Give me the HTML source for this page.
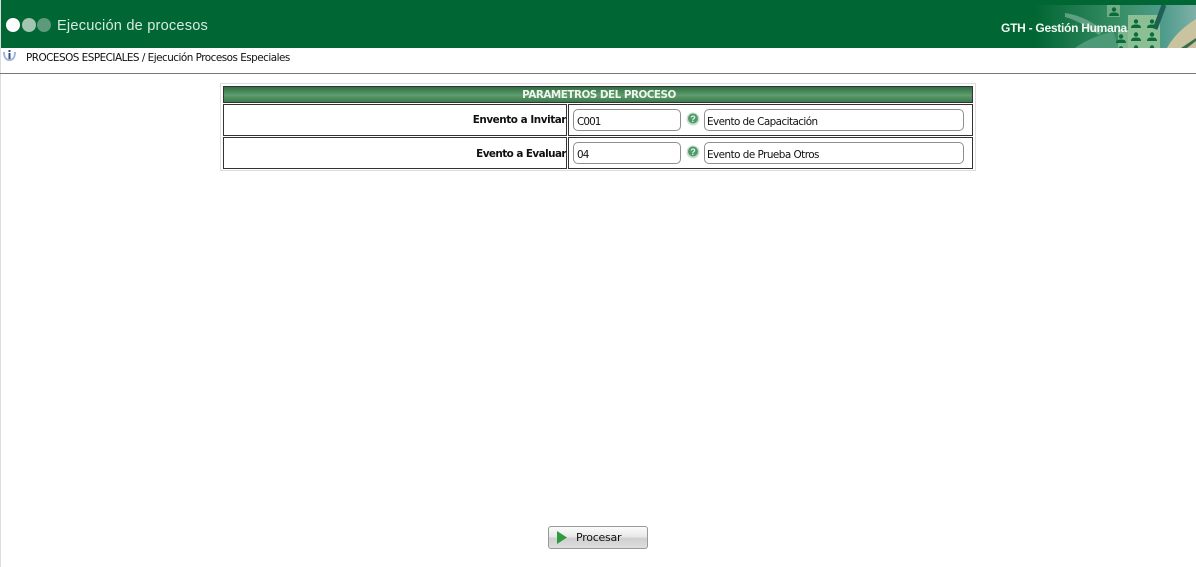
<!DOCTYPE html>
<html lang="es"><head><meta charset="utf-8"><title>Ejecución de procesos</title>
<style>
html,body{margin:0;padding:0;width:1196px;height:567px;overflow:hidden;background:#fff}
body{position:relative;font-family:"DejaVu Sans","Liberation Sans",sans-serif;color:#111}
.a{position:absolute;box-sizing:border-box}
.t{position:absolute;white-space:nowrap;font-size:10.4px;line-height:14px;letter-spacing:-.5px}
.b{font-weight:bold;letter-spacing:-.44px;text-align:right}
.cell{border:1px solid #333;background:#fff}
.inp{border:1px solid #8f8f8f;border-radius:5px;background:#fff}
.dot{position:absolute;border-radius:50%;width:14px;height:14px;top:18px}
</style></head><body>
<div class="a" style="left:0;top:0;width:1px;height:567px;background:#ddd"></div>
<div class="a" style="left:1px;top:0;width:1195px;height:48px;background:#006633"></div>
<svg class="a" style="left:1035px;top:5px" width="161" height="43" viewBox="0 0 161 43">
<defs><linearGradient id="g" x1="0" x2="1"><stop offset="0" stop-color="#006633"/><stop offset=".2" stop-color="#177547"/><stop offset=".55" stop-color="#3a9068"/><stop offset=".8" stop-color="#4f9c8c"/><stop offset="1" stop-color="#7fb0a8"/></linearGradient></defs>
<rect width="161" height="43" fill="url(#g)"/>
<path d="M30 8C45 10 60 18 68 26L64 30C52 22 42 15 30 12z" fill="#5fa082"/>
<path d="M40 43C52 34 66 30 78 26L84 43z" fill="#4d9a78"/>
<path d="M72 0H85V12H72z" fill="#6fae85"/>
<path d="M93 10H125V43H93z" fill="#8dbf95"/>
<path d="M83 25H93V43H83z" fill="#7db58c"/>
<path d="M129 0L120 24" stroke="#1f5f55" stroke-width="5" fill="none"/>
<path d="M132 43C138 32 148 22 161 14V43z" fill="#c9c3a0"/>
<path d="M146 43L161 33V36L152 43z" fill="#3d6b4f"/>
<g fill="#0b6b3c"><g id="p"><circle cx="79" cy="4.500" r="2.200"/><path d="M74 11c0-3 2-3.500 5-3.500s5 .5 5 3.500z"/></g>
<use href="#p" x="22" y="12"/><use href="#p" x="38" y="12"/><use href="#p" x="7" y="27"/><use href="#p" x="22" y="25"/><use href="#p" x="38" y="25"/><use href="#p" x="7" y="39"/><use href="#p" x="22" y="38"/><use href="#p" x="38" y="38"/></g>
</svg>
<div class="dot" style="left:6px;background:#fff"></div>
<div class="dot" style="left:22px;background:#a3c4b1"></div>
<div class="dot" style="left:37px;background:#5c9a7b"></div>
<div class="t" style="left:57px;top:17px;font:14.6px/18px 'Liberation Sans',sans-serif;color:#d6ebdf;letter-spacing:.2px">Ejecución de procesos</div>
<div class="t" style="left:1001px;top:21px;font:bold 12px/15px 'Liberation Sans',sans-serif;color:#f2f7f2;letter-spacing:-.27px">GTH - Gestión Humana</div>
<svg class="a" style="left:3px;top:49px" width="13" height="13" viewBox="0 0 13 13"><path d="M1 3c0 5 2 8 5.500 8S12 8 12 3" fill="none" stroke="#9fb6d6" stroke-width="2"/><rect x="5.500" y="1" width="2" height="2" fill="#2b4e8c"/><rect x="5.500" y="4" width="2" height="6" fill="#2b4e8c"/></svg>
<div class="t" style="left:26px;top:51px">PROCESOS ESPECIALES / Ejecución Procesos Especiales</div>
<div class="a" style="left:0;top:73px;width:1196px;height:1px;background:#777"></div>
<div class="a" style="left:220px;top:83px;width:756px;height:88px;border:1px solid #ddd"></div>
<div class="a" style="left:223px;top:86px;width:750px;height:17px;border:1px solid #333;background:linear-gradient(#2f6f43,#5f9c6e 55%,#3c7a4e)"></div>
<div class="t" style="left:224px;top:88px;width:750px;text-align:center;font-weight:bold;color:#eef5ec;letter-spacing:-.5px">PARAMETROS DEL PROCESO</div>
<div class="a cell" style="left:223px;top:104px;width:344px;height:32px"></div>
<div class="a cell" style="left:568px;top:104px;width:405px;height:32px"></div>
<div class="a cell" style="left:223px;top:137px;width:344px;height:32px"></div>
<div class="a cell" style="left:568px;top:137px;width:405px;height:32px"></div>
<div class="t b" style="left:223px;width:343px;top:113px">Envento a Invitar</div>
<div class="t b" style="left:223px;width:343px;top:147px;letter-spacing:-.55px">Evento a Evaluar</div>
<div class="a inp" style="left:573px;top:109px;width:108px;height:22px"></div>
<div class="a inp" style="left:704px;top:109px;width:260px;height:22px"></div>
<div class="a inp" style="left:573px;top:142px;width:108px;height:22px"></div>
<div class="a inp" style="left:704px;top:142px;width:260px;height:22px"></div>
<div class="t" style="left:577px;top:115px;letter-spacing:-.9px">C001</div>
<div class="t" style="left:707px;top:115px;letter-spacing:-.56px">Evento de Capacitación</div>
<div class="t" style="left:577px;top:148px;letter-spacing:-.9px">04</div>
<div class="t" style="left:707px;top:148px;letter-spacing:-.52px">Evento de Prueba Otros</div>
<svg class="a" style="left:686px;top:112px" width="14" height="14" viewBox="0 0 14 14"><circle cx="7" cy="7" r="6.500" fill="#c9e0cf"/><circle cx="7" cy="6.500" r="5" fill="#4f9a68"/><text x="7" y="10" font-size="9" font-weight="bold" text-anchor="middle" fill="#e8f5ea" font-family="Liberation Sans">?</text></svg>
<svg class="a" style="left:686px;top:145px" width="14" height="14" viewBox="0 0 14 14"><circle cx="7" cy="7" r="6.500" fill="#c9e0cf"/><circle cx="7" cy="6.500" r="5" fill="#4f9a68"/><text x="7" y="10" font-size="9" font-weight="bold" text-anchor="middle" fill="#e8f5ea" font-family="Liberation Sans">?</text></svg>
<div class="a" style="left:548px;top:526px;width:100px;height:23px;border:1px solid #999;border-radius:3px;background:linear-gradient(#fbfbfb,#e9e9e9 45%,#cfcfcf 55%,#dedede)"></div>
<svg class="a" style="left:556px;top:530px" width="12" height="15" viewBox="0 0 12 15"><path d="M1 1L11 7.500L1 14z" fill="#2f9a3f"/></svg>
<div class="t" style="left:576px;top:531px;font-size:11px;letter-spacing:-.25px">Procesar</div>
</body></html>
